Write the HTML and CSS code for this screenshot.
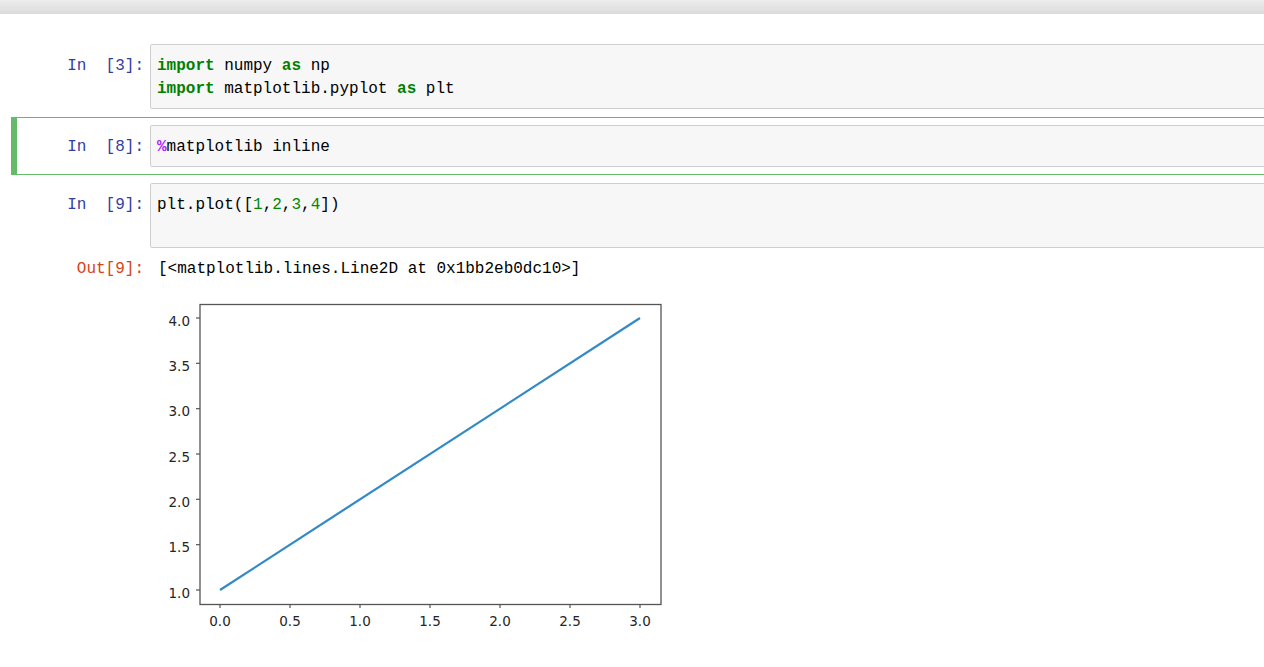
FILE: index.html
```html
<!DOCTYPE html>
<html>
<head>
<meta charset="utf-8">
<title>Notebook</title>
<link rel="stylesheet" href="styles.css">
</head>
<body>
<div class="topbar"></div>
<div class="notebook">
  <div class="cell">
    <div class="row">
      <div class="prompt in">In&nbsp;&nbsp;[3]:</div>
      <div class="editor"><pre><span class="kw">import</span> numpy <span class="kw">as</span> np
<span class="kw">import</span> matplotlib.pyplot <span class="kw">as</span> plt</pre></div>
    </div>
  </div>
  <div class="cell selected">
    <div class="row">
      <div class="prompt in">In&nbsp;&nbsp;[8]:</div>
      <div class="editor"><pre><span class="magic">%</span>matplotlib inline</pre></div>
    </div>
  </div>
  <div class="cell">
    <div class="row">
      <div class="prompt in">In&nbsp;&nbsp;[9]:</div>
      <div class="editor"><pre>plt.plot([<span class="num">1</span>,<span class="num">2</span>,<span class="num">3</span>,<span class="num">4</span>])
 </pre></div>
    </div>
    <div class="row out-row">
      <div class="prompt out">Out[9]:</div>
      <div class="out-text">[&lt;matplotlib.lines.Line2D at 0x1bb2eb0dc10&gt;]</div>
    </div>
    <div class="row img-row">
      <div class="prompt"></div>
      <div class="out-img">
        <svg width="512" height="340" viewBox="0 0 512 340" xmlns="http://www.w3.org/2000/svg">
          <g class="ticks" stroke="#444" stroke-width="1.1">
            <line x1="38" y1="296" x2="42" y2="296"/>
            <line x1="38" y1="250.7" x2="42" y2="250.7"/>
            <line x1="38" y1="205.3" x2="42" y2="205.3"/>
            <line x1="38" y1="160" x2="42" y2="160"/>
            <line x1="38" y1="114.7" x2="42" y2="114.7"/>
            <line x1="38" y1="69.3" x2="42" y2="69.3"/>
            <line x1="38" y1="24" x2="42" y2="24"/>
            <line x1="62" y1="310" x2="62" y2="314"/>
            <line x1="132" y1="310" x2="132" y2="314"/>
            <line x1="202" y1="310" x2="202" y2="314"/>
            <line x1="272" y1="310" x2="272" y2="314"/>
            <line x1="342" y1="310" x2="342" y2="314"/>
            <line x1="412" y1="310" x2="412" y2="314"/>
            <line x1="482" y1="310" x2="482" y2="314"/>
          </g>
          <polyline points="62,296 482,24" fill="none" stroke="#3189c6" stroke-width="2.2"/>
          <rect x="42" y="10.5" width="461" height="300" fill="none" stroke="#555" stroke-width="1.3"/>
          <g class="ylab" text-anchor="end">
            <text x="32" y="303.5">1.0</text>
            <text x="32" y="258.2">1.5</text>
            <text x="32" y="212.8">2.0</text>
            <text x="32" y="167.5">2.5</text>
            <text x="32" y="122.2">3.0</text>
            <text x="32" y="76.8">3.5</text>
            <text x="32" y="31.5">4.0</text>
          </g>
          <g class="xlab" text-anchor="middle">
            <text x="62" y="332">0.0</text>
            <text x="132" y="332">0.5</text>
            <text x="202" y="332">1.0</text>
            <text x="272" y="332">1.5</text>
            <text x="342" y="332">2.0</text>
            <text x="412" y="332">2.5</text>
            <text x="482" y="332">3.0</text>
          </g>
        </svg>
      </div>
    </div>
  </div>
</div>
</body>
</html>
```

FILE: styles.css
```css
html, body {
  margin: 0;
  padding: 0;
  background: #ffffff;
  overflow: hidden;
}

body {
  font-family: "Liberation Mono", "DejaVu Sans Mono", monospace;
  font-size: 16px;
  color: #000;
}

.topbar {
  height: 14px;
  background: linear-gradient(#ededed, #dbdbdb);
}

.notebook {
  padding: 22px 0 0 11px;
}

.cell {
  margin-right: -40px;
  border: 1px solid transparent;
  border-left: 6px solid transparent;
  padding: 7px 0;
}

.cell.selected {
  border-color: #66bb6a;
}

.row {
  display: flex;
  align-items: flex-start;
}

.prompt {
  flex: 0 0 133px;
  box-sizing: border-box;
  padding-right: 6px;
  text-align: right;
  line-height: 23px;
  white-space: nowrap;
}

.prompt.in {
  padding-top: 11px;
  color: #303f9f;
}

.prompt.out {
  color: #d84315;
}

.editor {
  flex: 1;
  border: 1px solid #cfcfcf;
  border-radius: 2px;
  background: #f7f7f7;
  padding: 10px 6px 7px 6px;
}

.editor pre {
  margin: 0;
  font: inherit;
  line-height: 23px;
}

.kw {
  color: #008000;
  font-weight: bold;
}

.magic {
  color: #aa22ff;
  font-weight: bold;
}

.num {
  color: #008800;
}

.out-row {
  margin-top: 10px;
}

.out-text {
  padding-left: 8px;
  line-height: 23px;
  white-space: pre;
}

.img-row {
  margin-top: 13px;
}

.out-img {
  padding-left: 8px;
}

.out-img svg {
  display: block;
}

.ylab text, .xlab text {
  font-family: "DejaVu Sans", sans-serif;
  font-size: 13.5px;
  fill: #262626;
}
```
